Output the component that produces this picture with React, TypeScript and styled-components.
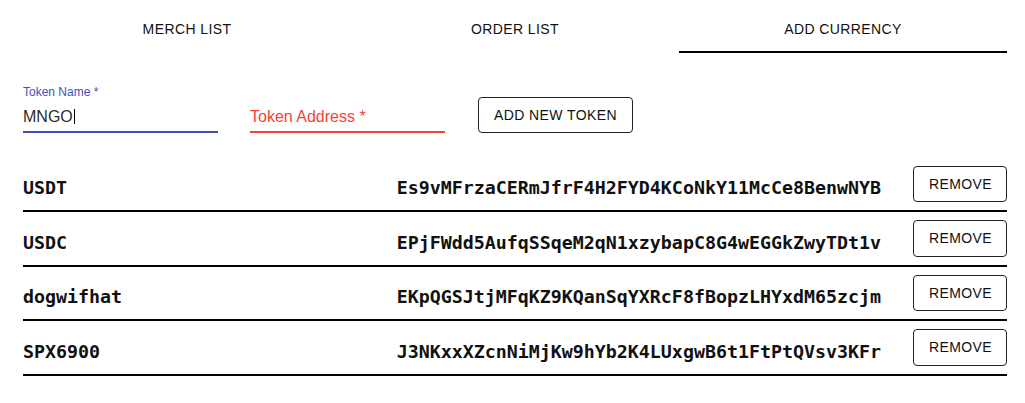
import React from "react";
import styled, { createGlobalStyle } from "styled-components";

const GlobalStyle = createGlobalStyle`
  html, body {
    margin: 0;
    padding: 0;
    background: #ffffff;
  }
  body {
    font-family: "Liberation Sans", Arial, sans-serif;
    color: #000;
  }
`;

const Page = styled.div`
  padding: 5px 18px 0 23px;
  width: 984px;
`;

const TabBar = styled.nav`
  display: flex;
  height: 48px;
`;

const Tab = styled.button<{ $active?: boolean }>`
  flex: 1;
  display: flex;
  align-items: center;
  justify-content: center;
  background: none;
  border: none;
  border-bottom: 2px solid ${(p) => (p.$active ? "#000" : "transparent")};
  padding: 2px 16px 0;
  font-family: "Liberation Sans", Arial, sans-serif;
  font-size: 14px;
  letter-spacing: 0.4px;
  text-transform: uppercase;
  color: #111;
  cursor: pointer;
`;

const FormRow = styled.div`
  display: flex;
  align-items: flex-end;
  gap: 32px;
  margin-top: 32px;
`;

const Field = styled.label`
  display: flex;
  flex-direction: column;
  width: 195px;
  height: 48px;
`;

const FieldLabel = styled.span`
  height: 16px;
  font-size: 12px;
  line-height: 14px;
  color: #3f51b5;
`;

const InputBox = styled.div<{ $color: string }>`
  display: flex;
  align-items: center;
  height: 23px;
  padding: 4px 0 3px;
  border-bottom: 2px solid ${(p) => p.$color};
`;

const InputValue = styled.span`
  font-size: 16px;
  line-height: 23px;
  color: rgba(0, 0, 0, 0.87);
`;

const Caret = styled.span`
  display: inline-block;
  width: 1px;
  height: 15px;
  margin-left: 1px;
  background: #000;
`;

const TextInput = styled.input`
  width: 100%;
  border: none;
  outline: none;
  padding: 0;
  background: transparent;
  font-family: "Liberation Sans", Arial, sans-serif;
  font-size: 16px;
  line-height: 23px;
  height: 23px;
  &::placeholder {
    color: #f44336;
    opacity: 1;
  }
`;

const OutlinedButton = styled.button`
  height: 36.5px;
  padding: 5px 15px;
  margin-left: 1px;
  background: #fff;
  border: 1px solid #222;
  border-radius: 4px;
  font-family: "Liberation Sans", Arial, sans-serif;
  font-size: 14px;
  letter-spacing: 0.4px;
  line-height: 24.5px;
  text-transform: uppercase;
  color: #111;
  cursor: pointer;
  white-space: nowrap;
`;

const TokenList = styled.ul`
  list-style: none;
  margin: 24.5px 0 0;
  padding: 0;
`;

const TokenRow = styled.li`
  display: flex;
  align-items: center;
  padding: 8px 0;
  border-bottom: 2px solid #000;
`;

const Mono = styled.span`
  font-family: "DejaVu Sans Mono", "Liberation Mono", monospace;
  font-weight: 700;
  font-size: 18.3px;
  padding-top: 8px;
  color: #111;
`;

const TokenName = styled(Mono)`
  flex: 1;
`;

const TokenAddress = styled(Mono)`
  margin-right: 32px;
`;

const RemoveButton = styled(OutlinedButton)`
  width: 94px;
  margin-left: 0;
`;

const tokens = [
  { name: "USDT", address: "Es9vMFrzaCERmJfrF4H2FYD4KCoNkY11McCe8BenwNYB" },
  { name: "USDC", address: "EPjFWdd5AufqSSqeM2qN1xzybapC8G4wEGGkZwyTDt1v" },
  { name: "dogwifhat", address: "EKpQGSJtjMFqKZ9KQanSqYXRcF8fBopzLHYxdM65zcjm" },
  { name: "SPX6900", address: "J3NKxxXZcnNiMjKw9hYb2K4LUxgwB6t1FtPtQVsv3KFr" },
];

export default function App() {
  return (
    <>
      <GlobalStyle />
      <Page>
        <TabBar>
          <Tab>Merch List</Tab>
          <Tab>Order List</Tab>
          <Tab $active>Add Currency</Tab>
        </TabBar>

        <FormRow>
          <Field>
            <FieldLabel>Token Name *</FieldLabel>
            <InputBox $color="#3f51b5">
              <InputValue>MNGO</InputValue>
              <Caret />
            </InputBox>
          </Field>
          <Field>
            <FieldLabel />
            <InputBox $color="#f44336">
              <TextInput placeholder="Token Address *" />
            </InputBox>
          </Field>
          <OutlinedButton>Add New Token</OutlinedButton>
        </FormRow>

        <TokenList>
          {tokens.map((t) => (
            <TokenRow key={t.name}>
              <TokenName>{t.name}</TokenName>
              <TokenAddress>{t.address}</TokenAddress>
              <RemoveButton>Remove</RemoveButton>
            </TokenRow>
          ))}
        </TokenList>
      </Page>
    </>
  );
}
